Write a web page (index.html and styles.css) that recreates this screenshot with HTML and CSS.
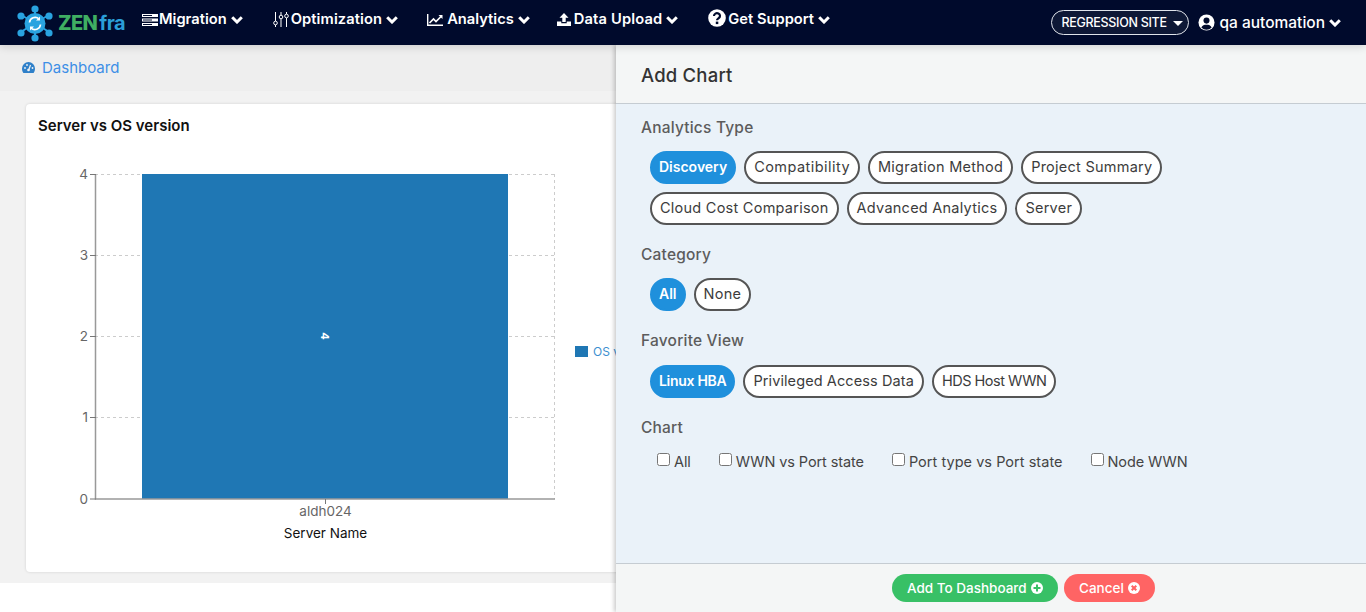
FILE: index.html
```html
<!DOCTYPE html>
<html lang="en">
<head>
<meta charset="utf-8">
<title>Add Chart</title>
<link rel="stylesheet" href="styles.css">
</head>
<body>
<header class="topbar">
  <a class="brand">
    <svg class="brand-mark" viewBox="0 0 38 40" width="38" height="40">
      <g stroke="#29a3e0" stroke-width="2"><path d="M19 20V5M19 20V35M19 20L5 12M19 20L33 12M19 20L5 29M19 20L33 29"/></g>
      <g fill="#29a3e0"><circle cx="19" cy="6" r="3.6"/><circle cx="19" cy="35" r="3.6"/><circle cx="5" cy="13" r="3.6"/><circle cx="33" cy="13" r="3.6"/><circle cx="5" cy="30" r="3.6"/><circle cx="33" cy="30" r="3.6"/><circle cx="19" cy="20.500" r="10.500"/></g>
      <path d="M13.500 19.500a5.600 5.600 0 0 1 9.500-3.500M24.500 21.500a5.600 5.600 0 0 1-9.500 3.500" fill="none" stroke="#fff" stroke-width="1.700"/>
      <path d="M24 13.500v4h-4zM14 27.500v-4h4z" fill="#fff"/>
    </svg>
    <span class="brand-zen">ZEN</span><span class="brand-fra">fra</span>
  </a>
  <nav class="menu">
    <a class="menu-item m1">
      <svg class="ic" viewBox="0 0 16 12" width="16" height="12"><path d="M0 0h16v3H0zM0 4.500h16v3H0zM0 9h16v3H0z" fill="#fff"/><path d="M1 1.500h9M1 6h9M1 10.500h9" stroke="#000a2c"/></svg>
      <span>Migration</span><svg class="chev" viewBox="0 0 12 8" width="12" height="8"><path d="M1.200 1.300L6 6l4.800-4.700" fill="none" stroke="#fff" stroke-width="3"/></svg>
    </a>
    <a class="menu-item m2">
      <svg class="ic" viewBox="0 0 16 15" width="16" height="15"><g fill="none" stroke="#fff" stroke-width="1"><path d="M2.500 0v9M2.500 13v2M8 0v3M8 7v8M13.500 0v2M13.500 6v9"/><circle cx="2.500" cy="11" r="1.800"/><circle cx="8" cy="5" r="1.800"/><circle cx="13.500" cy="4" r="1.800"/></g></svg>
      <span>Optimization</span><svg class="chev" viewBox="0 0 12 8" width="12" height="8"><path d="M1.200 1.300L6 6l4.800-4.700" fill="none" stroke="#fff" stroke-width="3"/></svg>
    </a>
    <a class="menu-item m3">
      <svg class="ic" viewBox="0 0 16 12" width="16" height="12"><path d="M.7 0v11.300H16" fill="none" stroke="#fff" stroke-width="1.400"/><path d="M2.500 9L6.500 5l2.500 2.500L14.500 2" fill="none" stroke="#fff" stroke-width="1.700"/><path d="M11.500 1H15.500V5z" fill="#fff"/></svg>
      <span>Analytics</span><svg class="chev" viewBox="0 0 12 8" width="12" height="8"><path d="M1.200 1.300L6 6l4.800-4.700" fill="none" stroke="#fff" stroke-width="3"/></svg>
    </a>
    <a class="menu-item m4">
      <svg class="ic" viewBox="0 0 14 13" width="14" height="13"><path d="M7 0l4.500 4.800H8.700V9H5.300V4.800H2.500zM0 8.500h4.300v1.700h5.400V8.500H14V13H0z" fill="#fff"/></svg>
      <span>Data Upload</span><svg class="chev" viewBox="0 0 12 8" width="12" height="8"><path d="M1.200 1.300L6 6l4.800-4.700" fill="none" stroke="#fff" stroke-width="3"/></svg>
    </a>
    <a class="menu-item m5">
      <svg class="ic-help" viewBox="0 0 18 18" width="18" height="18"><circle cx="9" cy="9" r="8.800" fill="#fff"/><path d="M6 7a3 2.700 0 1 1 4.600 2.200C9.500 10 9 10.300 9 11.300" fill="none" stroke="#000a2c" stroke-width="2.200"/><rect x="7.800" y="12.600" width="2.500" height="2.500" fill="#000a2c"/></svg>
      <span>Get Support</span><svg class="chev" viewBox="0 0 12 8" width="12" height="8"><path d="M1.200 1.300L6 6l4.800-4.700" fill="none" stroke="#fff" stroke-width="3"/></svg>
    </a>
  </nav>
  <div class="top-right">
    <button class="site-select">REGRESSION SITE<i class="caret"></i></button>
    <a class="user">
      <svg viewBox="0 0 18 18" width="17" height="17"><circle cx="9" cy="9" r="8.500" fill="#fff"/><circle cx="9" cy="7" r="3.200" fill="#000a2c"/><path d="M3.500 14.300c1-2.500 3-3 5.500-3s4.500.5 5.500 3a7.500 7.500 0 0 1-11 0z" fill="#000a2c"/></svg>
      <span>qa automation</span><svg class="chev" viewBox="0 0 12 8" width="12" height="8"><path d="M1.200 1.300L6 6l4.800-4.700" fill="none" stroke="#fff" stroke-width="3"/></svg>
    </a>
  </div>
</header>

<main class="page">
  <div class="crumb">
    <svg viewBox="0 0 13 11" width="13" height="11"><path d="M6.500 0A6.500 6.500 0 0 0 0 6.500c0 1.700.5 3.200 1.400 4.500h10.200c.9-1.300 1.400-2.800 1.400-4.500A6.500 6.500 0 0 0 6.500 0z" fill="#2f80c9"/><path d="M6.500 8.500L8.500 3" stroke="#f2f2f2" stroke-width="1.200"/><circle cx="6.500" cy="8" r="1.300" fill="#f2f2f2"/><circle cx="3" cy="6" r=".9" fill="#f2f2f2"/><circle cx="10.500" cy="6" r=".9" fill="#f2f2f2"/><circle cx="5" cy="3" r=".9" fill="#f2f2f2"/></svg>
    <span>Dashboard</span>
  </div>
  <div class="canvas">
    <section class="card">
      <h2 class="card-title">Server vs OS version</h2>
      <svg class="chart" viewBox="0 0 600 400" width="600" height="400">
        <path d="M69 21.500H529M69 102.500H529M69 183.500H529M69 264.500H529M528.500 21V346" stroke="#ccc" stroke-dasharray="3 3" fill="none"/>
        <rect x="116" y="21" width="366" height="325" fill="#1f77b4"/>
        <path d="M69.500 21V346H529" fill="none" stroke="#999" stroke-width="1.500"/>
        <path d="M64 21.500h6M64 102.500h6M64 183.500h6M64 264.500h6M64 346h6M299.500 346v5" stroke="#777"/>
        <g class="tick-y">
          <text x="62" y="26">4</text><text x="62" y="107">3</text><text x="62" y="188">2</text><text x="62" y="269">1</text><text x="62" y="351">0</text>
        </g>
        <text class="tick-x" x="299.500" y="363">aldh024</text>
        <text class="axis-x" x="299.500" y="385">Server Name</text>
        <text class="bar-label" transform="translate(295 183) rotate(90)">4</text>
        <rect x="549" y="193" width="13" height="11" fill="#1f77b4"/>
        <text class="legend" x="567" y="203">OS version</text>
      </svg>
    </section>
    <i class="card-edge"></i>
  </div>
</main>

<aside class="panel">
  <div class="panel-head">Add Chart</div>
  <div class="panel-body">
    <h3 class="group-title">Analytics Type</h3>
    <div class="pills">
      <span class="pill on">Discovery</span><span class="pill loose">Compatibility</span><span class="pill">Migration Method</span><span class="pill">Project Summary</span><span class="pill">Cloud Cost Comparison</span><span class="pill">Advanced Analytics</span><span class="pill">Server</span>
    </div>
    <h3 class="group-title">Category</h3>
    <div class="pills">
      <span class="pill on">All</span><span class="pill">None</span>
    </div>
    <h3 class="group-title">Favorite View</h3>
    <div class="pills pills-fav">
      <span class="pill on tight">Linux HBA</span><span class="pill snug">Privileged Access Data</span><span class="pill caps">HDS Host WWN</span>
    </div>
    <h3 class="group-title">Chart</h3>
    <div class="checks">
      <label class="check"><input type="checkbox">All</label>
      <label class="check"><input type="checkbox">WWN vs Port state</label>
      <label class="check check-wide"><input type="checkbox">Port type vs Port state</label>
      <label class="check"><input type="checkbox">Node WWN</label>
    </div>
  </div>
  <div class="panel-foot">
    <button class="btn btn-add">Add To Dashboard
      <svg viewBox="0 0 12 12" width="12" height="12"><circle cx="6" cy="6" r="6" fill="#fff"/><path d="M6 2.500v7M2.500 6h7" stroke="#38c066" stroke-width="2"/></svg>
    </button>
    <button class="btn btn-cancel">Cancel
      <svg viewBox="0 0 12 12" width="12" height="12"><circle cx="6" cy="6" r="6" fill="#fff"/><path d="M3.700 3.700l4.600 4.600M8.300 3.700l-4.600 4.600" stroke="#ff6464" stroke-width="2"/></svg>
    </button>
  </div>
</aside>
</body>
</html>
```
FILE: styles.css
```css
* { box-sizing: border-box; }
html, body { margin: 0; height: 100%; overflow: hidden; background: #fff; }
body { font-family: "Inter", "Noto Sans", sans-serif; color: #333; }
svg { display: block; flex: none; }

.topbar { height: 45px; background: #000a2c; display: flex; color: #fff; position: relative; z-index: 3; box-shadow: 0 2px 8px rgba(0,0,0,.14); }
.brand { width: 142px; padding: 3px 0 0 16px; display: flex; align-items: flex-start; font-weight: 800; font-size: 20px; letter-spacing: -.6px; line-height: 41px; }
.brand-mark { margin-right: 4px; }
.brand-zen { color: #3fae62; }
.brand-fra { color: #2b9fd8; margin-left: 2px; font-weight: 700; }

.menu { display: flex; align-items: flex-start; padding-top: 10px; font-size: 14.700px; font-weight: 600; line-height: 19px; }
.menu-item { display: flex; align-items: center; height: 19px; }
.ic { margin-right: 2px; }
.ic-help { margin: -4px 2px 0 0; }
.chev { margin-left: 4px; }
.m1 .ic { margin-right: 1px; }
.m2 { margin-left: 30px; letter-spacing: .1px; }
.m3 { margin-left: 29px; }
.m4 { margin-left: 27px; letter-spacing: .15px; }
.m5 { margin-left: 30px; }
.m3 .ic { margin-right: 4px; }
.m4 .ic { margin-right: 3px; }

.top-right { margin-left: auto; display: flex; align-items: flex-start; padding: 10px 25px 0 0; }
.site-select { width: 138px; height: 25px; border: 1px solid #dfe3ea; border-radius: 13px; background: #0e1836; color: #fff; font: 500 12.500px/1 "Inter", sans-serif; letter-spacing: -.3px; padding: 1px 0 0 9px; display: flex; align-items: center; white-space: nowrap; }
.caret { border: 5px solid transparent; border-top: 5px solid #fff; border-bottom: 0; margin-left: 6px; }
.user { display: flex; align-items: center; height: 25px; margin-left: 9px; font-size: 15.500px; font-weight: 500; }
.user span { margin-left: 4px; }

.page { height: 538px; background: #f2f2f2; }
.crumb { height: 46px; background: #eee; display: flex; align-items: center; padding: 0 0 1px 22px; gap: 7px; font-size: 15px; color: #3d8fe6; }
.canvas { padding: 13px 0 0 26px; display: flex; }
.card { width: 600px; height: 468px; background: #fff; border-radius: 4px; box-shadow: 0 0 3px rgba(0,0,0,.14); }
.card-title { margin: 0; padding: 13px 0 0 12px; font-size: 15px; font-weight: 600; color: #111; line-height: 18px; }
.chart { margin-top: 18px; }
.chart text { font-family: "Inter", sans-serif; font-size: 13.500px; }
.tick-y text { text-anchor: end; fill: #666; }
.tick-x { text-anchor: middle; fill: #666; }
.axis-x { text-anchor: middle; fill: #111; }
.chart .bar-label { fill: #fff; font-size: 11px; font-weight: 700; text-anchor: middle; }
.chart .legend { fill: #3d8fd0; font-size: 12px; }
.card-edge { width: 2px; height: 22px; margin-top: 13px; background: #2f80c9; }

.panel { position: absolute; left: 616px; top: 45px; right: 0; bottom: 0; display: flex; flex-direction: column; background: #eaf2f9; box-shadow: -2px 0 4px rgba(0,0,0,.2); z-index: 2; }
.panel-head { height: 59px; padding: 19px 0 0 25px; background: #f4f6f6; border-bottom: 1px solid #c5ccd2; font-size: 18.500px; font-weight: 500; letter-spacing: .2px; line-height: 22px; color: #333; }
.panel-body { flex: 1; padding: 15px 0 0 25px; }
.group-title { margin: 0; font-size: 15.500px; font-weight: 500; letter-spacing: .2px; line-height: 18px; color: #5c5c5c; }
.pills { display: flex; flex-wrap: wrap; gap: 8px; width: 540px; margin: 14px 0 21px 9px; }
.pills-fav { margin-top: 15px; }
.pill { height: 33px; padding: 0 8px; border: 2px solid #555; border-radius: 17px; font-size: 14.500px; letter-spacing: .25px; line-height: 28px; color: #3c3c3c; background: #fff; }
.pill.on { background: #1f90dc; border-color: #1f90dc; color: #fff; font-weight: 600; font-size: 14px; letter-spacing: 0; line-height: 27px; padding: 0 7px; }
.pill.on.tight { letter-spacing: -.3px; }
.pill.loose { letter-spacing: .45px; }
.pill.snug { letter-spacing: .1px; }
.pill.caps { letter-spacing: -.5px; }
.checks { display: flex; margin: 16px 0 0 16px; gap: 28px; }
.check { display: flex; align-items: flex-start; font-size: 14.500px; letter-spacing: -.1px; line-height: 18px; color: #444; }
.check-wide { letter-spacing: .03px; }
.check input { width: 13px; height: 13px; margin: 0 4px 0 0; }

.panel-foot { height: 49px; background: #f4f6f6; border-top: 1px solid #c5ccd2; display: flex; align-items: flex-start; padding: 10px 0 0 276px; gap: 6px; }
.btn { height: 28px; border: 0; border-radius: 14px; color: #fff; font: 500 13.500px/28px "Inter", sans-serif; display: flex; align-items: center; gap: 4px; padding: 0 0 0 15px; white-space: nowrap; }
.btn-add { background: #38c066; width: 166px; }
.btn-cancel { background: #ff6464; width: 91px; }
```
